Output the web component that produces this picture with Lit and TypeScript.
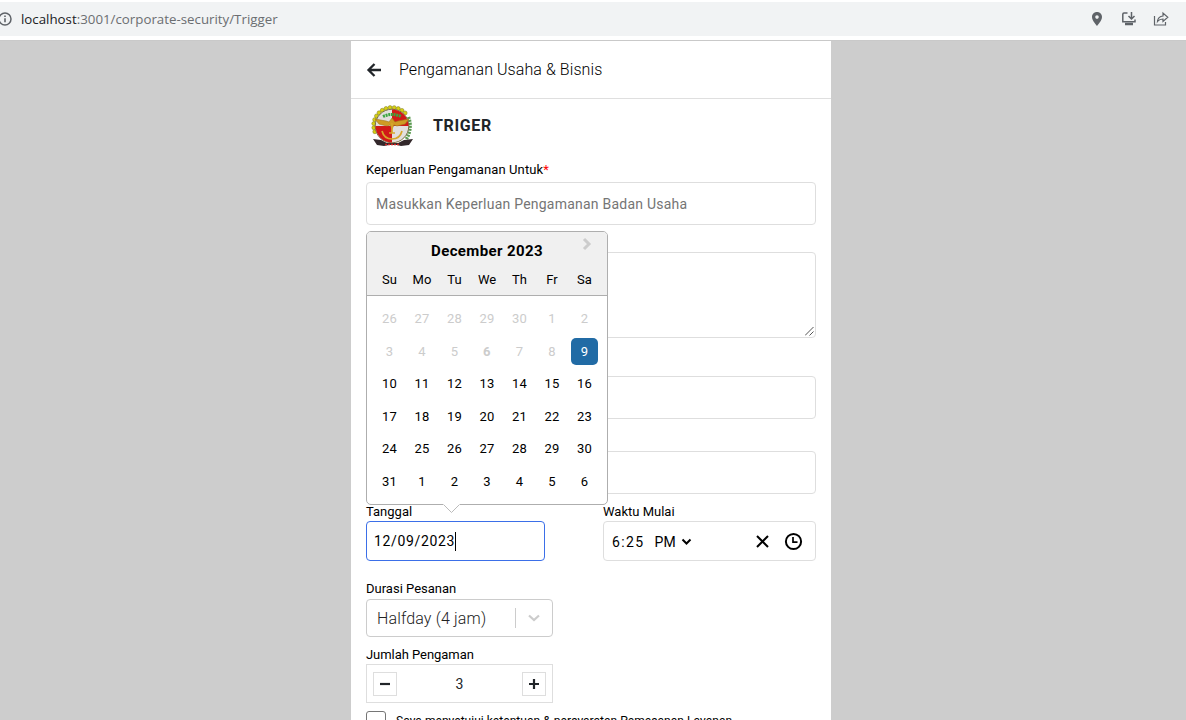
import { LitElement, html, css, svg } from "lit";
import { customElement } from "lit/decorators.js";

const days: [number, string][] = [
  ...[26, 27, 28, 29, 30, 1, 2, 3, 4, 5].map((d) => [d, "day off"] as [number, string]),
  [6, "day off marked"],
  [7, "day off"],
  [8, "day off"],
  [9, "day selected"],
  ...[10, 11, 12, 13, 14, 15, 16, 17, 18, 19, 20, 21, 22, 23, 24, 25, 26, 27, 28, 29, 30, 31, 1, 2, 3, 4, 5, 6].map(
    (d) => [d, "day"] as [number, string]
  ),
];

const teeth = Array.from({ length: 13 }, (_, i) => {
  const a = ((160 + i * 13) * Math.PI) / 180;
  return svg`<circle cx=${21 + 18.3 * Math.cos(a)} cy=${20.5 + 18 * Math.sin(a)} r="2"/>`;
});

@customElement("date-picker")
class DatePicker extends LitElement {
  static styles = css`
    :host { display: block; box-sizing: border-box; width: 242px; height: 274px; border: 1px solid #aeaeae; border-radius: 5px; background: #fff; position: relative; color: #000; font-size: 13px; }
    .head { height: 63px; background: #f0f0f0; border-bottom: 1px solid #aeaeae; border-radius: 4px 4px 0 0; position: relative; }
    .month { text-align: center; font-weight: 700; font-size: 15px; line-height: 20px; padding-top: 9px; letter-spacing: 0.38px; }
    .next { position: absolute; right: 14px; top: 5px; }
    .grid { display: grid; grid-template-columns: repeat(7, 27px); column-gap: 5.5px; justify-content: center; }
    .names { line-height: 27px; padding-top: 5px; text-align: center; }
    .days { row-gap: 5.5px; padding-top: 9px; }
    .day { height: 27px; line-height: 27px; text-align: center; border-radius: 5px; letter-spacing: 0.3px; }
    .off { color: #ccc; }
    .marked { font-weight: 700; }
    .selected { background: #216ba5; color: #fff; }
    .tip { position: absolute; left: 76px; top: 271px; }
  `;
  render() {
    return html`
      <div class="head">
        <div class="month">December 2023</div>
        <svg class="next" width="12" height="14" viewBox="0 0 12 14"><path d="M3 2l5 5-5 5" fill="none" stroke="#ccc" stroke-width="3"/></svg>
        <div class="grid names">${["Su", "Mo", "Tu", "We", "Th", "Fr", "Sa"].map((d) => html`<span>${d}</span>`)}</div>
      </div>
      <div class="grid days">${days.map(([d, c]) => html`<div class=${c}>${d}</div>`)}</div>
      <svg class="tip" width="18" height="11" viewBox="0 0 18 11"><path d="M0 0h17v1.5L8.5 9.5 0 1.5z" fill="#fff"/><path d="M.5 1.5l8 8 8-8" fill="none" stroke="#bbb"/></svg>
    `;
  }
}

@customElement("app-root")
class AppRoot extends LitElement {
  static styles = css`
    * { box-sizing: border-box; }
    :host { display: flex; flex-direction: column; height: 720px; overflow: hidden; background: #cdcdcd; color: #000; font-family: Roboto, "Noto Sans", sans-serif; }
    svg { display: block; flex: none; }
    .bar { height: 41px; flex: none; border-top: 2px solid #fff; border-bottom: 5px solid #fff; background: #f1f3f4; display: flex; align-items: center; font: 13.3px/20px "Open Sans", sans-serif; color: #6b6e71; position: relative; }
    .bar::after { content: ""; position: absolute; left: 0; right: 0; bottom: -5px; height: 1px; background: #c9c9c9; }
    .url { margin-left: 9px; flex: 1; letter-spacing: 0; }
    .host { color: #202124; }
    .icons { display: flex; gap: 16px; padding-right: 17px; }
    .page { width: 480px; margin-left: 351px; height: 679px; flex: none; background: #fff; display: flex; flex-direction: column; }
    .top { height: 58px; flex: none; border-bottom: 1px solid #dfdfdf; display: flex; align-items: center; padding-left: 15px; gap: 17px; font-size: 16px; font-weight: 300; letter-spacing: 0.08px; }
    .brand { height: 57px; flex: none; display: flex; align-items: center; padding: 0 0 3px 20px; gap: 20px; font-size: 16px; font-weight: 700; color: #212529; letter-spacing: 0.65px; }
    .name { padding-bottom: 1px; }
    .form { padding: 4px 15px 0; font-size: 13px; display: flex; flex-direction: column; }
    .label { height: 22px; line-height: 20px; letter-spacing: 0.1px; white-space: nowrap; }
    .req { color: #f00; }
    .box { border: 1px solid #dedede; border-radius: 4px; display: flex; align-items: center; }
    .need { height: 43px; padding-left: 9px; color: #757575; font-size: 14px; letter-spacing: 0.23px; }
    .area { height: 86px; margin-top: 27px; justify-content: flex-end; align-items: flex-end; padding: 0 1px 1px 0; }
    .line { height: 43px; margin-top: 38px; }
    .line + .line { margin-top: 32px; }
    .pair { display: grid; grid-template-columns: 179px 213px; column-gap: 58px; margin-top: 8px; }
    .pair .label { height: 19px; letter-spacing: 0; }
    .date { height: 40px; border-color: #3b6fe8; padding-left: 7px; font-size: 14px; letter-spacing: 0.65px; }
    .caret { width: 1px; height: 19px; background: #000; }
    .time { height: 40px; padding: 1px 12px 0 8px; font-size: 14px; letter-spacing: 0.6px; }
    .hm { letter-spacing: 1.4px; }
    .pm { margin-left: 10px; margin-right: 5px; letter-spacing: 0; }
    .x { margin-left: auto; margin-right: 15px; }
    .duration { margin-top: 18px; height: 20px; letter-spacing: 0; }
    .select { width: 187px; height: 38px; border-color: #ccc; font-size: 16px; font-weight: 300; color: #222; padding: 0 12px 0 10px; letter-spacing: 0.15px; }
    .sep { width: 1px; height: 20px; background: #ccc; margin: 0 12px 0 auto; }
    .amount { margin-top: 8px; height: 19px; letter-spacing: -0.05px; }
    .count { width: 187px; height: 39px; border: 1px solid #dedede; display: flex; align-items: center; justify-content: space-between; padding: 0 6px; font-size: 14px; color: #212529; }
    .btn { width: 24px; height: 24px; border: 1px solid #dedede; display: grid; place-items: center; }
    .agree { display: flex; gap: 10px; margin-top: 8px; }
    .check { width: 20px; height: 20px; border: 1px solid #767676; border-radius: 3px; flex: none; }
    .terms { font-size: 12px; line-height: 20px; white-space: nowrap; letter-spacing: 0.05px; }
    .picker { position: absolute; left: 366px; top: 231px; }
  `;
  render() {
    return html`
      <div class="bar">
        <svg width="12" height="14" viewBox="0 0 12 14" fill="none" stroke="#5f6368"><circle cx="5" cy="7" r="6" stroke-width="1.5"/><path d="M5 6.2v4M5 3.5v1.5" stroke-width="1.6"/></svg>
        <span class="url"><span class="host">localhost</span>:3001/corporate-security/Trigger</span>
        <div class="icons">
          <svg width="16" height="16" viewBox="0 0 16 16"><path fill="#5f6368" fill-rule="evenodd" d="M8 1C5 1 3 3.200 3 6c0 3.500 5 9 5 9s5-5.500 5-9c0-2.800-2-5-5-5zm0 3.300a1.800 1.800 0 1 1 0 3.600 1.800 1.800 0 0 1 0-3.600z"/></svg>
          <svg width="16" height="16" viewBox="0 0 16 16" fill="none" stroke="#5f6368" stroke-width="1.500"><path d="M6.500 2H3Q1.800 2 1.800 3.200v7.600H14V8.500"/><path d="M10.500 1v6.500M7.500 5l3 3 3-3"/><path d="M4 13h8" stroke-width="2.500"/></svg>
          <svg width="16" height="16" viewBox="0 0 16 16" fill="none" stroke="#5f6368" stroke-width="1.200"><path d="M1.500 5v9h11v-3"/><path d="M4.500 10.500Q5 5.500 10 5V2l4.800 4.300L10 10.500V8Q6.500 8 4.500 10.500z"/></svg>
        </div>
      </div>
      <div class="page">
        <div class="top">
          <svg width="16" height="16" viewBox="0 0 16 16" fill="none" stroke="#212529" stroke-width="2.300"><path d="M15 8H3M8.500 2l-6 6 6 6"/></svg>
          <span>Pengamanan Usaha &amp; Bisnis</span>
        </div>
        <div class="brand">
          <svg width="42" height="42" viewBox="0 0 42 42">
            <g fill="#d6cf12" stroke="#7a7720" stroke-width=".5">${teeth}</g>
            <path d="M37.500 12q4 11-2 22" fill="none" stroke="#5a9a50" stroke-width="3.500" stroke-dasharray="2 1"/>
            <path d="M2 34l8 1 6 3h11l6-3 9-1-4 6-8 1-4-1h-8l-5 1-7-1z" fill="#33282b"/>
            <circle cx="21" cy="21" r="16.800" fill="#e2dfdd" stroke="#777044"/>
            <path d="M21 4.500A16.500 16.500 0 0 1 37.500 21H21zM21 21v16.500A16.500 16.500 0 0 1 4.500 21z" fill="#d11a18"/>
            <path d="M12 11.500q9-4 18 0" fill="none" stroke="#3aa640" stroke-width="3" stroke-dasharray="2 .7"/>
            <path d="M4 14l11 2 3 1 3-4 3 4 3-1 11-2-4 5-8 2-3-1-2 4-2-4-3 1-8-2z" fill="#cf9c24" stroke="#a1771b" stroke-width=".6"/>
            <path d="M21 18v10M11 26q2 8 10 8t10-8M18 28h6" fill="none" stroke="#d8a62a" stroke-width="1.700"/>
            <path d="M14 39.500h14" stroke="#c22" stroke-width="1.300" stroke-dasharray="2 1"/>
          </svg>
          <span class="name">TRIGER</span>
        </div>
        <div class="form">
          <div class="label">Keperluan Pengamanan Untuk<span class="req">*</span></div>
          <div class="box need">Masukkan Keperluan Pengamanan Badan Usaha</div>
          <div class="box area"><svg width="9" height="9" viewBox="0 0 9 9" stroke="#555"><path d="M0 8.500L8.500 0M4.500 8.500l4-4"/></svg></div>
          <div class="box line"></div>
          <div class="box line"></div>
          <div class="pair">
            <div><div class="label">Tanggal</div><div class="box date"><span>12/09/2023</span><span class="caret"></span></div></div>
            <div><div class="label">Waktu Mulai</div>
              <div class="box time"><span class="hm">6:25</span><span class="pm">PM</span>
                <svg width="11" height="8" viewBox="0 0 11 8"><path d="M1.500 1.500l4 4 4-4" fill="none" stroke="#000" stroke-width="2"/></svg>
                <svg class="x" width="13" height="13" viewBox="0 0 13 13"><path d="M1 1l11 11M12 1L1 12" stroke="#000" stroke-width="2"/></svg>
                <svg width="19" height="19" viewBox="0 0 19 19" fill="none" stroke="#000" stroke-width="2"><circle cx="9.500" cy="9.500" r="7.600"/><path d="M9 5v5.200h4.500" stroke-width="1.700"/></svg>
              </div></div>
          </div>
          <div class="label duration">Durasi Pesanan</div>
          <div class="box select"><span>Halfday (4 jam)</span><span class="sep"></span>
            <svg width="12" height="8" viewBox="0 0 12 8"><path d="M1 1.500l5 4.500 5-4.500" fill="none" stroke="#ccc" stroke-width="2.200"/></svg></div>
          <div class="label amount">Jumlah Pengaman</div>
          <div class="count">
            <span class="btn"><svg width="12" height="12" viewBox="0 0 12 12"><path d="M1 6h10" stroke="#212529" stroke-width="2.200"/></svg></span>
            <span>3</span>
            <span class="btn"><svg width="12" height="12" viewBox="0 0 12 12"><path d="M1 6h10M6 1v10" stroke="#212529" stroke-width="2.200"/></svg></span>
          </div>
          <div class="agree"><span class="check"></span><span class="terms">Saya menyetujui ketentuan &amp; persyaratan Pemesanan Layanan</span></div>
        </div>
      </div>
      <date-picker class="picker"></date-picker>
    `;
  }
}
